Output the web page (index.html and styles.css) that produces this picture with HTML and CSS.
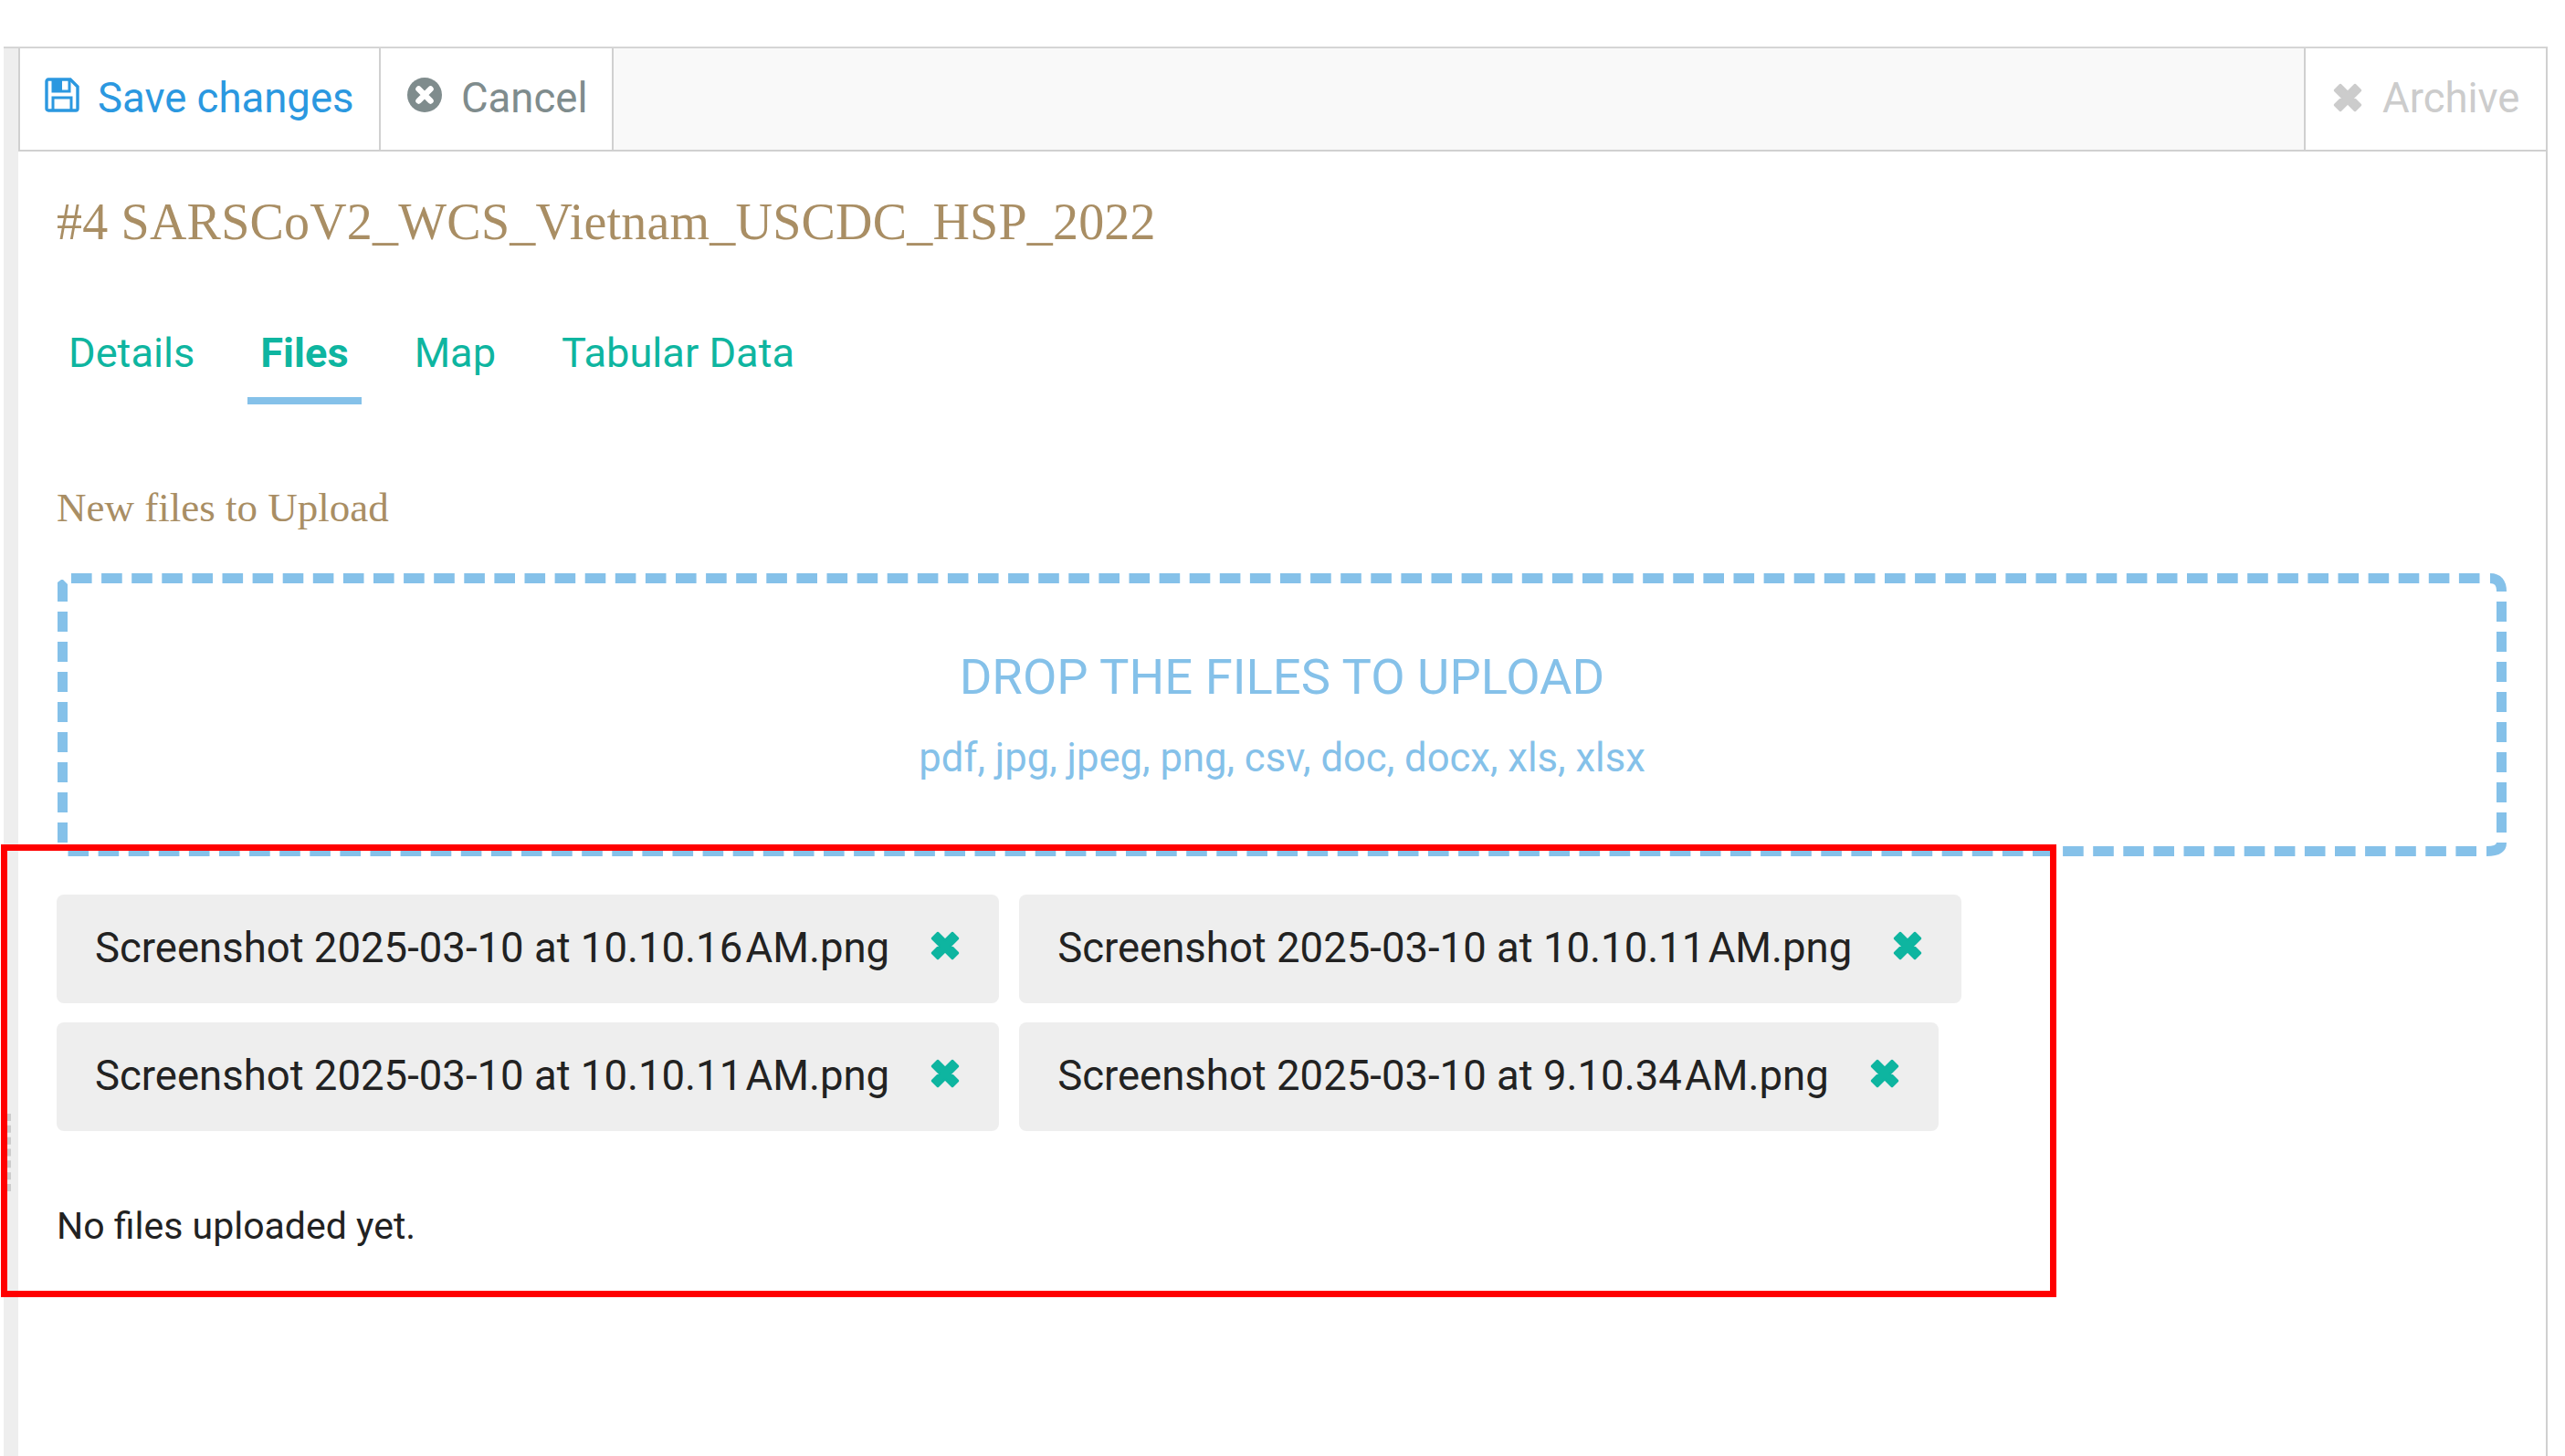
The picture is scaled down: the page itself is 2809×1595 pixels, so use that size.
FILE: index.html
```html
<!DOCTYPE html>
<html lang="en">
<head>
<meta charset="utf-8">
<title>Files</title>
<link rel="stylesheet" href="styles.css">
</head>
<body>
<svg class="defs" width="0" height="0" aria-hidden="true">
  <symbol id="times" viewBox="0 0 32 32">
    <path d="M8 2 16 10 24 2 30 8 22 16 30 24 24 30 16 22 8 30 2 24 10 16 2 8Z" fill="currentColor" stroke="currentColor" stroke-width="2.5" stroke-linejoin="round"/>
  </symbol>
</svg>
<div class="page">
  <div class="strip"></div>
  <main class="main">
    <header class="toolbar">
      <button class="tool tool-save">
        <svg class="icon" viewBox="0 0 38 38"><path d="M2 4a2 2 0 0 1 2-2h24l8 8v24a2 2 0 0 1-2 2H4a2 2 0 0 1-2-2Z" fill="none" stroke="currentColor" stroke-width="3.4"/><path d="M9 2v13h18V2" fill="none" stroke="currentColor" stroke-width="3"/><path d="M9 36V22h20v14" fill="none" stroke="currentColor" stroke-width="3"/><rect x="10" y="3" width="9" height="11" fill="currentColor"/></svg>
        <span>Save changes</span>
      </button>
      <button class="tool tool-cancel">
        <svg class="icon" viewBox="0 0 38 38"><circle cx="19" cy="19" r="19" fill="currentColor"/><path d="M12.5 12.500 25.500 25.500M25.500 12.500 12.500 25.500" stroke="#fff" stroke-width="6.500" stroke-linecap="round"/></svg>
        <span>Cancel</span>
      </button>
      <div class="toolbar-fill"></div>
      <button class="tool tool-archive">
        <svg class="icon-x"><use href="#times"/></svg>
        <span>Archive</span>
      </button>
    </header>
    <section class="content">
      <h1 class="title">#4 SARSCoV2_WCS_Vietnam_USCDC_HSP_2022</h1>
      <nav class="tabs">
        <a class="tab">Details</a>
        <a class="tab tab-active">Files</a>
        <a class="tab">Map</a>
        <a class="tab">Tabular Data</a>
      </nav>
      <h2 class="subhead">New files to Upload</h2>
      <div class="dropzone">
        <svg class="dash" width="2682" height="310" aria-hidden="true">
          <path class="dash-line dash-h" d="M15 5.500H2653"/>
          <path class="dash-solid" d="M2664 5.500Q2676.500 5.500 2676.500 20"/>
          <path class="dash-line dash-v" d="M2676.500 31V284"/>
          <path class="dash-solid" d="M2676.500 295Q2676.500 304.500 2660 304.500"/>
          <path class="dash-line dash-h" d="M2649 304.500H10"/>
          <path class="dash-line dash-v" d="M5.500 295V14"/>
          <polygon class="dash-tip" points="0,14 0,10 4,7 6,7 11,12 11,14"/>
        </svg>
        <div class="drop-title">DROP THE FILES TO UPLOAD</div>
        <div class="drop-types">pdf, jpg, jpeg, png, csv, doc, docx, xls, xlsx</div>
      </div>
      <div class="chips">
        <div class="chip"><span class="chip-name">Screenshot 2025-03-10 at 10.10.16 <span class="chip-ext">AM.png</span></span><svg class="chip-x"><use href="#times"/></svg></div>
        <div class="chip"><span class="chip-name">Screenshot 2025-03-10 at 10.10.11 <span class="chip-ext">AM.png</span></span><svg class="chip-x"><use href="#times"/></svg></div>
        <div class="chip"><span class="chip-name">Screenshot 2025-03-10 at 10.10.11 <span class="chip-ext">AM.png</span></span><svg class="chip-x"><use href="#times"/></svg></div>
        <div class="chip"><span class="chip-name">Screenshot 2025-03-10 at 9.10.34 <span class="chip-ext">AM.png</span></span><svg class="chip-x"><use href="#times"/></svg></div>
      </div>
      <p class="empty">No files uploaded yet.</p>
    </section>
  </main>
</div>
<div class="grip"></div>
<div class="highlight"></div>
</body>
</html>
```
FILE: styles.css
```css
* { box-sizing: border-box; }
html, body { margin: 0; height: 100%; background: #fff; }
body { position: relative; overflow: hidden; font-family: Roboto, sans-serif; color: #222; }
.defs { position: absolute; }
.page { display: flex; height: 1544px; margin: 51px 19px 0 4px; border-top: 2px solid #d5d5d5; border-right: 2px solid #d0d0d0; }
.strip { width: 16px; flex: none; background: #eee; }
.main { flex: 1; min-width: 0; }
.toolbar { display: flex; height: 113px; background: #f9f9f9; border-bottom: 2px solid #d0d0d0; border-left: 2px solid #d0d0d0; }
.tool { display: flex; align-items: flex-start; padding: 0; border: 0; background: #fff; font: 400 45.500px/1 Roboto, sans-serif; }
.tool span { margin-top: 32px; }
.icon { width: 38px; height: 38px; margin-top: 32px; flex: none; }
.tool-save { width: 395px; padding-left: 27px; gap: 20px; color: #2b98e0; border-right: 2px solid #d0d0d0; }
.tool-cancel { width: 255px; padding-left: 29px; gap: 21px; color: #7f8c8d; border-right: 2px solid #d0d0d0; }
.toolbar-fill { flex: 1; }
.tool-archive { width: 265px; padding-left: 30px; gap: 22px; color: #ccc; border-left: 2px solid #d0d0d0; }
.icon-x { width: 32px; height: 32px; margin-top: 38px; flex: none; }
.content { padding: 0 43px; }
.title { margin: 44px 0 0 -1px; font: 400 56px/66px "Liberation Serif", serif; letter-spacing: 0.2px; color: #a98e64; }
.tabs { display: flex; gap: 44px; margin: 80px 0 0 -2px; }
.tab { padding: 1px 14px 0; height: 87px; font: 400 45.200px/60px Roboto, sans-serif; color: #0eb5a0; }
.tab-active { font-weight: 700; border-bottom: 8px solid #85c1e9; }
.subhead { margin: 83px 0 0 -1px; font: 400 45px/60px "Liberation Serif", serif; color: #a98e64; }
.dropzone { position: relative; display: flex; flex-direction: column; align-items: center; height: 310px; margin-top: 42px; padding-top: 84px; color: #85c1e9; }
.dash { position: absolute; left: 0; top: 0; }
.dash-line { fill: none; stroke: #85c1e9; stroke-width: 11px; }
.dash-h { stroke-dasharray: 22.6 10.5; }
.dash-v { stroke-dasharray: 22 11; }
.dash-solid { fill: none; stroke: #85c1e9; stroke-width: 11px; }
.dash-tip { fill: #85c1e9; }
.drop-title { font-size: 54.400px; line-height: 60px; }
.drop-types { margin-top: 33px; font-size: 43.600px; line-height: 52px; }
.chips { display: flex; flex-wrap: wrap; gap: 21px 22px; width: 2150px; margin: 42px 0 0 -1px; }
.chip { display: flex; align-items: flex-start; height: 119px; padding: 0 43px 0 42px; background: #eee; border-radius: 8px; }
.chip-name { margin-top: 32px; font-size: 45.500px; line-height: 53px; color: #222; }
.chip-ext { margin-left: -8px; }
.chip-x { width: 32px; height: 32px; margin: 40px 0 0 45px; color: #0eb5a0; flex: none; }
.empty { margin: 79px 0 0 -1px; font-size: 41px; line-height: 50px; color: #222; }
.grip { position: absolute; left: 8px; top: 1220px; width: 4px; height: 85px; border-left: 4px dashed #ccc; }
.highlight { position: absolute; left: 1px; top: 925px; width: 2251px; height: 496px; border: 7px solid #f00; }
```
